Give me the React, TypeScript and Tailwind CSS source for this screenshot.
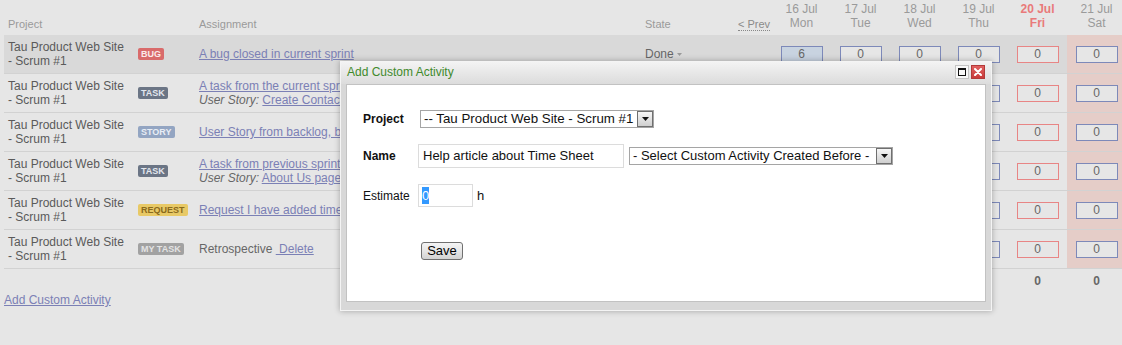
import React from "react";

type Row = {
  badge: string;
  badgeCls: string;
  line1?: string;
  story?: string;
  custom?: boolean;
  state?: string;
  values: number[];
  highlight?: boolean;
};

const rows: Row[] = [
  { badge: "BUG", badgeCls: "bg-[#d96b6b] text-[#fbeaea]", line1: "A bug closed in current sprint", state: "Done", values: [6, 0, 0, 0, 0, 0], highlight: true },
  { badge: "TASK", badgeCls: "bg-[#6b7585] text-[#e3e7ee]", line1: "A task from the current sprint", story: "Create Contact page", values: [0, 0, 0, 0, 0, 0] },
  { badge: "STORY", badgeCls: "bg-[#93a5c2] text-[#e8edf5]", line1: "User Story from backlog, but in current sprint", values: [0, 0, 0, 0, 0, 0] },
  { badge: "TASK", badgeCls: "bg-[#6b7585] text-[#e3e7ee]", line1: "A task from previous sprint", story: "About Us page", values: [0, 0, 0, 0, 0, 0] },
  { badge: "REQUEST", badgeCls: "bg-[#e8c966] text-[#8a6a1c]", line1: "Request I have added time to", values: [0, 0, 0, 0, 0, 0] },
  { badge: "MY TASK", badgeCls: "bg-[#a2a2a2] text-[#e4e4e4]", custom: true, values: [0, 0, 0, 0, 0, 0] },
];

const days = [
  ["16 Jul", "Mon"],
  ["17 Jul", "Tue"],
  ["18 Jul", "Wed"],
  ["19 Jul", "Thu"],
  ["20 Jul", "Fri"],
  ["21 Jul", "Sat"],
];

function FakeSelect({ text, width, textCls }: { text: string; width: string; textCls: string }) {
  return (
    <div className={`flex h-[18px] items-stretch border border-[#a5a5a5] bg-white ${width}`}>
      <div className={`flex-1 overflow-hidden whitespace-nowrap pl-[3px] leading-[16px] text-[#111] ${textCls}`}>{text}</div>
      <div className="flex w-[16px] items-center justify-center border border-[#6f6f6f] bg-gradient-to-b from-[#f6f6f6] to-[#cfcfcf]">
        <svg width="7" height="4" viewBox="0 0 7 4">
          <path d="M0 0 H7 L3.5 4 Z" fill="#111" />
        </svg>
      </div>
    </div>
  );
}

export default function App() {
  return (
    <div className="relative h-[345px] w-[1122px] overflow-hidden bg-[#e6e6e6] font-['Liberation_Sans',Arial,sans-serif]">
      <div className="w-[1126px] pl-1">
        {/* header */}
        <div className="flex h-[35px] items-end text-[#9a9a9a]">
          <div className="w-[126px] pb-[4px] pl-[4px] text-[11px] leading-[14px]">Project</div>
          <div className="w-[65px]" />
          <div className="w-[446px] pb-[4px] pl-[4px] text-[11px] leading-[14px]">Assignment</div>
          <div className="w-[93px] pb-[4px] pl-[4px] text-[11px] leading-[14px]">State</div>
          <div className="w-[38px] pb-[4px] pl-[4px] text-[11px] leading-[14px]">
            <span className="border-b border-dotted border-[#888] text-[#8a8a8a]">&lt; Prev</span>
          </div>
          {days.map(([d, n], i) => (
            <div
              key={d}
              className={`w-[59px] pb-[5px] text-center text-[12px] leading-[14px] ${i === 4 ? "font-bold text-[#e97a7a]" : "text-[#9a9a9a]"}`}
            >
              <div>{d}</div>
              <div>{n}</div>
            </div>
          ))}
        </div>

        {/* rows */}
        {rows.map((r, idx) => (
          <div
            key={idx}
            className={`flex h-[39px] items-stretch border-b border-[#d2d2d2] ${r.highlight ? "bg-[#d9d9d9]" : ""}`}
          >
            <div className="flex w-[126px] items-center pl-[4px] text-[12px] leading-[14px] text-[#5a5a5a]">
              <div>Tau Product Web Site - Scrum #1</div>
            </div>
            <div className="flex w-[65px] items-center pl-[8px]">
              <span className={`inline-block rounded-[2px] px-[3px] text-[9px] font-bold leading-[12px] ${r.badgeCls}`}>
                {r.badge}
              </span>
            </div>
            <div className="flex w-[446px] flex-col justify-center overflow-hidden whitespace-nowrap pl-[4px] text-[12px] leading-[14px] text-[#666]">
              {r.custom ? (
                <div>
                  Retrospective{" "}
                  <a className="text-[#7b80b5] underline">{"\u00a0Delete"}</a>
                </div>
              ) : (
                <>
                  <div>
                    <a className="text-[#7b80b5] underline">{r.line1}</a>
                  </div>
                  {r.story && (
                    <div>
                      <i>User Story:</i> <a className="text-[#7b80b5] underline">{r.story}</a>
                    </div>
                  )}
                </>
              )}
            </div>
            <div className="flex w-[93px] items-center pl-[4px] text-[12px] text-[#666]">
              {r.state && (
                <>
                  <span>{r.state}</span>
                  <svg className="ml-[3px] mt-[1px]" width="5" height="3" viewBox="0 0 5 3">
                    <path d="M0 0 H5 L2.5 3 Z" fill="#9a9a9a" />
                  </svg>
                </>
              )}
            </div>
            <div className="w-[38px]" />
            {r.values.map((v, i) => (
              <div key={i} className={`flex w-[59px] items-center justify-center ${i === 5 ? "bg-[#e5cdc8]" : ""}`}>
                <div
                  className={`h-[17px] w-[42px] border text-center text-[12px] leading-[15px] text-[#666] ${
                    i === 4 ? "border-[#e88585]" : "border-[#7d89b9]"
                  } ${r.highlight && i === 0 ? "bg-[#c8d3e0]" : "bg-[#e6e6e6]"}`}
                >
                  {v}
                </div>
              </div>
            ))}
          </div>
        ))}

        {/* totals */}
        <div className="flex h-[24px] items-center">
          <div className="w-[768px]" />
          {[6, 0, 0, 0, 0, 0].map((v, i) => (
            <div key={i} className="w-[59px] text-center text-[12px] font-bold text-[#666]">
              {v}
            </div>
          ))}
        </div>
        <div className="text-[12px] leading-[15px]">
          <a className="text-[#7b80b5] underline">Add Custom Activity</a>
        </div>
      </div>

      {/* modal */}
      <div className="absolute left-[340px] top-[61px] flex h-[250px] w-[652px] flex-col border border-[#f4f4f4] bg-[#d8d8d8] shadow-[0_0_6px_rgba(0,0,0,0.3)]">
        <div className="flex h-[22px] items-start justify-between bg-gradient-to-b from-[#f3f3f3] to-[#dcdcdc] pl-[6px] pr-[6px]">
          <div className="text-[12px] leading-[20px] text-[#3f8a2c]">Add Custom Activity</div>
          <div className="mt-[3px] flex gap-[2px]">
            <div className="flex h-[14px] w-[14px] items-center justify-center border border-[#c4c4c4] bg-[#f8f8f8]">
              <div className="h-[8px] w-[8px] border border-t-2 border-[#111]" />
            </div>
            <div className="flex h-[14px] w-[14px] items-center justify-center border border-[#b23a3a] bg-gradient-to-b from-[#e06060] to-[#c83a3a]">
              <svg width="8" height="8" viewBox="0 0 8 8">
                <path d="M1 1 L7 7 M7 1 L1 7" stroke="#fff" strokeWidth="2" strokeLinecap="round" />
              </svg>
            </div>
          </div>
        </div>
        <div className="mx-[5px] h-[218px] border border-[#c2c2c2] bg-white">
          <div className="pl-[16px] pt-[25px] text-[12px] text-[#111]">
            <div className="flex h-[18px] items-center">
              <div className="w-[55px] font-bold">Project</div>
              <div className="ml-[2px]">
                <FakeSelect text="-- Tau Product Web Site - Scrum #1" width="w-[234px]" textCls="text-[13.3px]" />
              </div>
            </div>
            <div className="mt-[16px] flex h-[24px] items-center">
              <div className="w-[55px] font-bold">Name</div>
              <div className="h-[24px] w-[206px] whitespace-nowrap border border-[#dcdcdc] pl-[4px] text-[13px] leading-[22px] text-[#111]">
                Help article about Time Sheet
              </div>
              <div className="ml-[5px]">
                <FakeSelect text="- Select Custom Activity Created Before -" width="w-[264px]" textCls="text-[13px]" />
              </div>
            </div>
            <div className="mt-[16px] flex h-[23px] items-center">
              <div className="w-[55px]">Estimate</div>
              <div className="flex h-[23px] w-[55px] items-center border border-[#dcdcdc] pl-[3px]">
                <span className="bg-[#3399ff] text-[13px] leading-[17px] text-white">0</span>
              </div>
              <span className="ml-[4px] text-[13px]">h</span>
            </div>
            <div className="ml-[58px] mt-[35px]">
              <div className="flex h-[18px] w-[42px] items-center justify-center rounded-[3px] border border-[#707070] bg-gradient-to-b from-[#f4f4f4] via-[#e6e6e6] to-[#d2d2d2] text-[13px] leading-[16px] text-[#000]">
                Save
              </div>
            </div>
          </div>
        </div>
      </div>
    </div>
  );
}
